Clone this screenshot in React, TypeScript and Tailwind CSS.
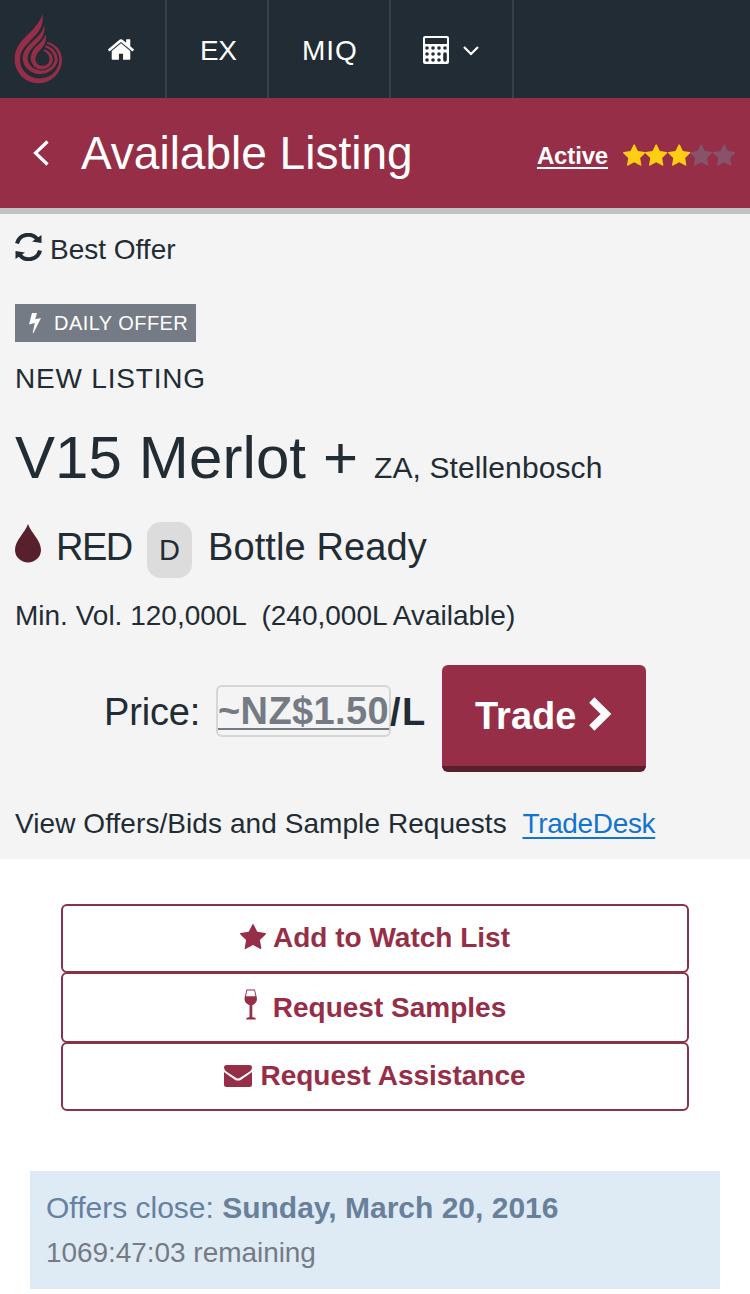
import type { ReactNode } from "react";

function Logo() {
  return (
    <svg className="w-[50px] h-[71px]" viewBox="40 40 150 216" preserveAspectRatio="none" fill="#962e47">
      <path d="M129 43C119 72 100 90 80 110C58 132 45 152 45 180A71 72 0 0 0 187 184C187 154 168 133 143 128L141 133C163 140 178 158 179 184A59 57 0 0 1 61 180C61 158 74 142 94 122C116 100 133 82 129 43Z" />
      <path d="M134 77C129 98 116 110 99 126C80 144 69 158 69 180A53 50 0 0 0 174 184C174 161 160 144 139 138L136 144C154 150 165 165 165 184A41 38 0 0 1 84 181C84 162 94 150 108 136C126 119 138 104 134 77Z" />
      <path d="M138 105C134 120 124 129 113 139C101 150 93 163 93 181A34 35 0 0 0 160 184C160 168 150 156 134 150L131 155C143 160 150 170 150 183A22 23 0 0 1 107 182C107 169 114 160 122 152C134 140 142 126 138 105Z" />
    </svg>
  );
}

function HomeIcon() {
  return (
    <svg className="w-[26px] h-[21px]" viewBox="89 250 1614 1290" fill="#fff">
      <path d="M1472 992v480q0 26-19 45t-45 19h-384v-384h-256v384h-384q-26 0-45-19t-19-45v-480q0-1 .5-3t.5-3l575-474 575 474q1 2 1 6zm223-69l-62 74q-8 9-21 11h-3q-13 0-21-7l-692-577-692 577q-12 8-24 7-13-2-21-11l-62-74q-8-10-7-23.500t11-21.500l719-599q32-26 76-26t76 26l244 204v-195q0-14 9-23t23-9h192q14 0 23 9t9 23v408l219 182q10 8 11 21.500t-7 23.500z" />
    </svg>
  );
}

function CalculatorIcon() {
  return (
    <svg className="w-[26px] h-[28px]" viewBox="0 0 26 28">
      <rect width="26" height="28" rx="2" fill="#fff" />
      <g fill="#212c35">
        <rect x="2" y="2" width="22" height="6" rx="0.7" />
        {[12, 18, 24].map((y) =>
          [4, 10, 16, 22].map((x) =>
            x === 22 && y > 12 ? null : <circle key={`${x}-${y}`} cx={x} cy={y} r="1.8" />
          )
        )}
        <rect x="20.2" y="16.2" width="3.6" height="9.6" rx="1.8" />
      </g>
    </svg>
  );
}

function Star({ className }: { className: string }) {
  return (
    <svg className={className} viewBox="0 0 1664 1587" fill="currentColor">
      <path d="M1664 615q0 22-26 48l-363 354 86 500q1 7 1 20 0 21-10.500 35.500t-30.500 14.500q-19 0-40-12l-449-236-449 236q-22 12-40 12-21 0-31.500-14.500t-10.500-35.500q0-6 2-20l86-500-364-354q-25-27-25-48 0-37 56-46l502-73 225-455q19-41 49-41t49 41l225 455 502 73q56 9 56 46z" />
    </svg>
  );
}

function RefreshIcon() {
  return (
    <svg className="w-[27px] h-[28px]" viewBox="0 0 27 28" fill="none" stroke="#212c35" strokeWidth="4">
      <path d="M2 10.500A11.600 11.600 0 0 1 22.500 6.500M25 17.500A11.600 11.600 0 0 1 4.500 21.500" />
      <path d="M26.500 2v8l-9.500-1.500zM.5 26v-8l9.500 1.500z" fill="#212c35" stroke="none" />
    </svg>
  );
}

function WineIcon() {
  return (
    <svg className="-mt-[3px] w-[14px] h-[31px]" viewBox="0 0 14 31">
      <path d="M2.500 0.600h8.400l1.900 8c.9 4-2.100 6.600-4.500 7.400V28l3.400 1v1.400H2.300V29l3.200-1V16C3 15.200-.2 12.600.7 8.600z" fill="#962e47" />
      <path d="M3.200 1.400h7.100l1.200 5.900H2z" fill="#fff" />
    </svg>
  );
}

function MailIcon() {
  return (
    <svg className="w-[28px] h-[22px]" viewBox="0 0 28 22" fill="#962e47">
      <path d="M2.500 0h23A2.500 2.500 0 0 1 28 2.500C28 4.500 26.500 6 25 7l-8.500 5.600c-1.800 1.200-3.200 1.200-5 0L3 7C1.500 6 0 4.300 0 2.500A2.500 2.500 0 0 1 2.500 0z" />
      <path d="M0 7c3 2.500 7 5 10.500 7.400 2.300 1.600 4.700 1.600 7 0C21 12 25 9.500 28 7v12.500a2.500 2.500 0 0 1-2.500 2.500h-23A2.500 2.500 0 0 1 0 19.500z" />
    </svg>
  );
}

function ActionButton({ className, children }: { className: string; children: ReactNode }) {
  return (
    <button
      className={`flex w-full justify-center rounded-md border-2 border-[#8a3048] font-bold text-[28px] leading-8 text-[#962e47] ${className}`}
    >
      {children}
    </button>
  );
}

export default function App() {
  return (
    <div className="w-[750px] h-[1294px] overflow-hidden bg-white text-[#212c35] text-[28px] leading-8 whitespace-pre font-['Liberation_Sans',Arial,sans-serif]">
      <nav className="flex h-[98px] bg-[#212c35] text-white">
        <div className="w-[75px] pl-[13px] pt-[13px]">
          <Logo />
        </div>
        <a className="flex w-[92px] pl-[33px] pt-[39px] border-r-2 border-[#36414a]">
          <HomeIcon />
        </a>
        <a className="w-[102px] pl-[33px] pt-[35px] border-r-2 border-[#36414a] tracking-[-0.5px]">EX</a>
        <a className="w-[122px] pl-[33px] pt-[35px] border-r-2 border-[#36414a] tracking-[0.9px]">MIQ</a>
        <a className="flex w-[123px] gap-[14px] pl-8 pt-9 border-r-2 border-[#36414a]">
          <CalculatorIcon />
          <svg className="mt-[10px] w-4 h-[10px]" viewBox="0 0 16 10" fill="none" stroke="#fff" strokeWidth="2.200">
            <path d="M1 1l7 7 7-7" />
          </svg>
        </a>
      </nav>

      <header className="flex h-[116px] items-center border-b-6 border-[#c3c2c2] bg-[#962e47] text-white pl-[33px] pr-[15px]">
        <svg className="w-[16px] h-[26px]" viewBox="0 0 16 26" fill="none" stroke="#fff" strokeWidth="3.200">
          <path d="M14.500 1.500L2.500 13l12 11.500" />
        </svg>
        <h1 className="ml-8 text-[46px] leading-[52px]">Available Listing</h1>
        <a className="ml-auto mr-[15px] mt-[5px] text-2xl font-bold tracking-[-0.15px] underline decoration-2 underline-offset-[3px]">Active</a>
        <div className="mt-[3px] flex text-[#ffcd12]">
          <Star className="w-[22.400px] h-[22px]" />
          <Star className="w-[22.400px] h-[22px]" />
          <Star className="w-[22.400px] h-[22px]" />
          <Star className="w-[22.400px] h-[22px] text-[#86536a]" />
          <Star className="w-[22.400px] h-[22px] text-[#86536a]" />
        </div>
      </header>

      <section className="h-[645px] bg-[#f4f4f4] px-[15px] pt-[19px]">
        <div className="flex gap-2">
          <RefreshIcon />
          <span className="pt-px">Best Offer</span>
        </div>
        <div className="mt-[38px] flex h-[38px] w-[181px] items-center bg-[#757b84] text-xl text-white tracking-[0.45px] pl-[14px]">
          <svg className="w-[12px] h-[20px] mr-[13px]" viewBox="0 0 12 20" fill="#fff">
            <path d="M3 0h5L6.200 6.200 12 5 4.500 20l-.8-.3L5.800 10 0 11.500z" />
          </svg>
          DAILY OFFER
        </div>
        <p className="mt-[21px] tracking-[0.8px]">NEW LISTING</p>
        <h2 className="mt-[29px] flex items-baseline text-[60px] leading-[68px] tracking-[0.1px]">
          V15 Merlot +<small className="ml-4 text-[30px] leading-8">ZA, Stellenbosch</small>
        </h2>
        <div className="mt-[30px] flex h-14 items-start text-[38px] leading-[50px]">
          <svg className="mt-[2px] w-[26px] h-[39px]" viewBox="0 0 26 39" fill="#58202d">
            <path d="M13 0C16 9 26 16 26 26A13 12.500 0 0 1 0 26C0 16 10 9 13 0z" />
          </svg>
          <span className="ml-[15px] w-[91px] tracking-[-1.5px]">RED</span>
          <span className="flex h-14 w-[45px] items-center justify-center rounded-[14px] bg-[#dcdcdc] text-[29px]">D</span>
          <span className="ml-4 tracking-[0.1px]">Bottle Ready</span>
        </div>
        <p className="mt-[22px]">Min. Vol. 120,000L  (240,000L Available)</p>
        <div className="mt-[33px] flex pl-[89px] text-[38px]">
          <span className="w-[97px] pt-[25px] leading-[44px] tracking-[-0.15px]">Price:</span>
          <b className="ml-[15px] mt-5 h-[52px] w-[175px] rounded-md border-2 border-[#d6d6d6] text-[#757b84] leading-[48px] tracking-[0.4px] underline decoration-2 underline-offset-4">
            ~NZ$1.50
          </b>
          <b className="-ml-px pt-[25px] leading-[44px] tracking-[1.5px]">/L</b>
          <button className="ml-auto mr-[89px] flex h-[107px] w-[204px] rounded-md border-b-6 border-[#58202d] bg-[#962e47] pl-[33px] text-white font-bold leading-[102px]">
            Trade
            <svg className="ml-3 mt-[31px] w-[24px] h-[36px]" viewBox="0 0 24 36" fill="none" stroke="#fff" strokeWidth="7.500">
              <path d="M3.800 4L18 18 3.800 32" />
            </svg>
          </button>
        </div>
        <p className="mt-[36px] tracking-[0.07px]">
          View Offers/Bids and Sample Requests  <a className="text-[#1274d0] underline decoration-2 underline-offset-4 tracking-[-0.35px]">TradeDesk</a>
        </p>
      </section>

      <section className="px-[61px] pt-[45px]">
        <ActionButton className="h-[69px] pt-[16px] gap-[7px]">
          <Star className="mt-[2px] w-[26px] h-[25px]" />
          Add to Watch List
        </ActionButton>
        <ActionButton className="-mt-px h-[71px] pt-[18px] gap-[15px]">
          <WineIcon />
          Request Samples
        </ActionButton>
        <ActionButton className="-mt-px h-[69px] pt-[16px] gap-2">
          <span className="pt-[5px]">
            <MailIcon />
          </span>
          Request Assistance
        </ActionButton>
      </section>

      <section className="mx-[30px] mt-[60px] h-[118px] bg-[#deebf5] px-4 pt-5">
        <p className="text-[30px] leading-[34px] text-[#6681a1]">
          Offers close: <b className="text-[#69809b]">Sunday, March 20, 2016</b>
        </p>
        <p className="mt-3 text-[#757b84] tracking-[-0.05px]">1069:47:03 remaining</p>
      </section>
    </div>
  );
}
